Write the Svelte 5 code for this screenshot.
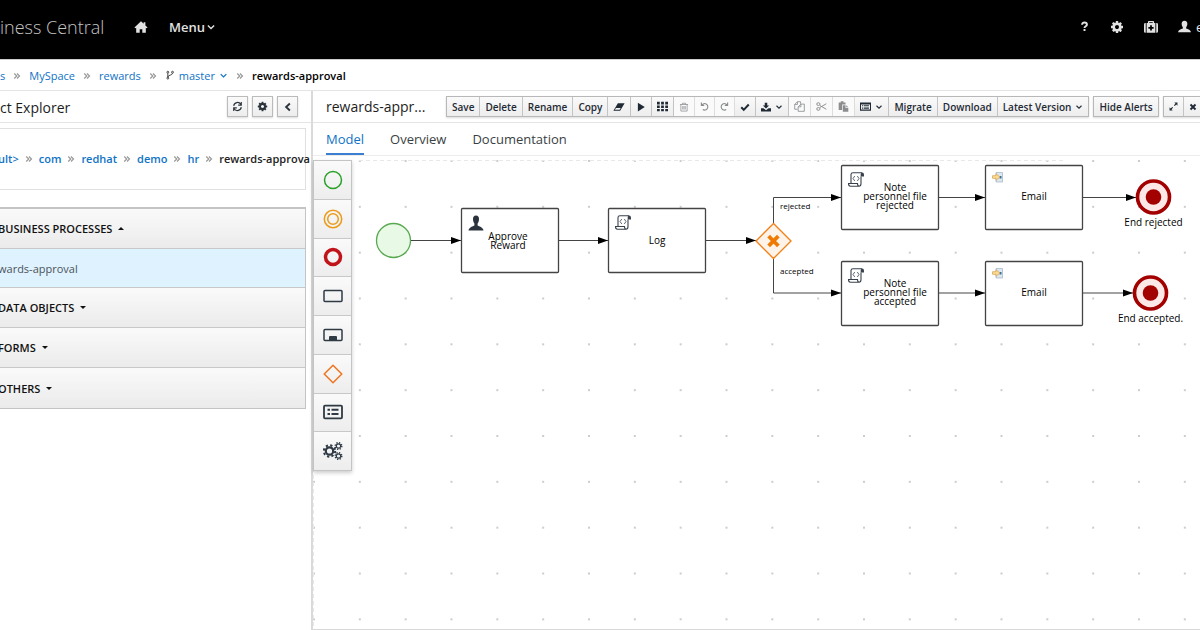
<script lang="ts">
	type Icon = { d: string; line?: number; box?: number };
	type Tool = { label?: string; icon?: string; title?: string; caret?: boolean; disabled?: boolean; size?: number };

	const icons: Record<string, Icon> = {
		home: { d: 'M8 1.500 0.500 8.500 1.500 9.500 2.500 8.800V14.500H6.500V10.500H9.500V14.500H13.500V8.800L14.500 9.500 15.500 8.500 13 6.200V2.500H11V4.300Z' },
		down: { d: 'M3 5.500 8 10.500 13 5.500', line: 2.2 },
		left: { d: 'M11 2.500 5 8 11 13.500', line: 3 },
		double: { d: 'M2.500 3 7.500 8 2.500 13M8 3 13 8 8 13', line: 2.4 },
		branch: { d: 'M4.500 5V11.500M12 5C12 9 4.500 7.500 4.500 11.500M3 3.500a1.500 1.500 0 1 0 3 0a1.500 1.500 0 1 0-3 0M3 13a1.500 1.500 0 1 0 3 0a1.500 1.500 0 1 0-3 0M10.500 3.500a1.500 1.500 0 1 0 3 0a1.500 1.500 0 1 0-3 0', line: 1.4 },
		question: { d: 'M4.500 5.500C4.500 2.800 6 2.300 8 2.300S11.500 3.300 11.500 5.300C11.500 7.600 8 7.500 8 10M8 11.800V14.500', line: 2.8 },
		cog: {
			box: 1792,
			d: 'M1152 896q0-106-75-181t-181-75-181 75-75 181 75 181 181 75 181-75 75-181zm512-109v222q0 12-8 23t-20 13l-185 28q-19 54-39 91 35 50 107 138 10 12 10 25t-9 23q-27 37-99 108t-94 71q-12 0-26-9l-138-108q-44 23-91 38-16 136-29 186-7 28-36 28h-222q-14 0-24.500-8.500t-11.500-21.500l-28-184q-49-16-90-37l-141 107q-10 9-25 9-14 0-25-11-126-114-165-168-7-10-7-23 0-12 8-23 15-21 51-66.500t54-70.500q-27-50-41-99l-183-27q-13-2-21-12.500t-8-23.500v-222q0-12 8-23t19-13l186-28q14-46 39-92-40-57-107-138-10-12-10-24 0-10 9-23 26-36 98.500-107.500t94.500-71.500q13 0 26 10l138 107q44-23 91-38 16-136 29-186 7-28 36-28h222q14 0 24.500 8.500t11.500 21.500l28 184q49 16 90 37l142-107q9-9 24-9 13 0 25 10 129 119 165 170 7 8 7 22 0 12-8 23-15 21-51 66.500t-54 70.500q26 50 41 98l183 28q13 2 21 12.500t8 23.500z'
		},
		medkit: { d: 'M0 5Q0 3.500 1.500 3.500H2V14.500H1.500Q0 14.500 0 13ZM14 3.500H14.500Q16 3.500 16 5V13Q16 14.500 14.500 14.500H14ZM3 3.500H4.500V2Q4.500 1 5.500 1H10.500Q11.500 1 11.500 2V3.500H13V14.500H3ZM6 3.500H10V2.500H6ZM7 6V8H5V10H7V12H9V10H11V8H9V6Z' },
		user: { d: 'M8 1C10.500 1 11.700 2.700 11.500 5 11.400 7 10.500 8.500 10 9.200V10.500C12.500 11.500 15.500 12 16 15H0C0.500 12 3.500 11.500 6 10.500V9.200C5.500 8.500 4.600 7 4.500 5 4.300 2.700 5.500 1 8 1Z' },
		refresh: { d: 'M2.500 7A5.600 5.600 0 0 1 12.800 4.800M13.500 1.500V6H9M13.500 9A5.600 5.600 0 0 1 3.200 11.200M2.500 14.500V10H7', line: 1.7 },
		eraser: { d: 'M6.500 3H15.500L9.500 13H0.500ZM3.900 9.300 2.500 11.800H8.800L10.300 9.300Z' },
		play: { d: 'M3 1 14 8 3 15Z' },
		grid: { d: 'M0 1H4V5H0ZM6 1H10V5H6ZM12 1H16V5H12ZM0 6.500H4V10H0ZM6 6.500H10V10H6ZM12 6.500H16V10H12ZM0 11.500H4V15H0ZM6 11.500H10V15H6ZM12 11.500H16V15H12Z' },
		trash: { d: 'M1.500 4H14.500M5.500 4V2H10.500V4M3 4V14.500H13V4M6 6.500V12M8 6.500V12M10 6.500V12', line: 1.2 },
		undo: { d: 'M2.500 1V6H7.500M3 5.800A5.800 5.800 0 1 1 5 13.500', line: 2 },
		redo: { d: 'M13.500 1V6H8.500M13 5.800A5.800 5.800 0 1 0 11 13.500', line: 2 },
		check: { d: 'M2 8.500 6 12.500 14 4', line: 3.2 },
		download: { d: 'M6 1H10V5.500H13L8 10.500 3 5.500H6ZM0 10H4L8 13 12 10H16V15H0Z' },
		copy: { d: 'M5 12H1V5L5 1H9.500V4M5 1V5H1M10 4.500H15V15H6V8.500L10 4.500V8.500H6', line: 1.2 },
		cut: { d: 'M5.500 6.500 15 12M5.500 9.500 15 4M1 4.500a2.400 2 0 1 0 4.800 0a2.400 2 0 1 0-4.800 0M1 11.500a2.400 2 0 1 0 4.800 0a2.400 2 0 1 0-4.800 0', line: 1.4 },
		paste: { d: 'M1 2H4V0.500H8V2H11V5H6V13H1ZM7 6H11V10H15V15.500H7ZM12 6 15 9H12Z' },
		list: { d: 'M0 2H16V14H0ZM1.500 5V12.500H14.500V5ZM3 6H4.500V7.200H3ZM5.500 6H13V7.200H5.500ZM3 8.200H4.500V9.400H3ZM5.500 8.200H13V9.400H5.500ZM3 10.400H4.500V11.600H3ZM5.500 10.400H13V11.600H5.500Z' },
		expand: { d: 'M9.500 1H15V6.500L13 4.500 10.200 7.300 8.700 5.800 11.500 3ZM6.500 15H1V9.500L3 11.500 5.800 8.700 7.300 10.200 4.500 13Z' },
		close: { d: 'M3 3 13 13M13 3 3 13', line: 3.8 }
	};

	const crumbs = ['s', 'MySpace', 'rewards'];
	const packages = ['ult>', 'com', 'redhat', 'demo', 'hr'];

	const sections = [
		{ title: 'BUSINESS PROCESSES', open: true, items: ['wards-approval'] },
		{ title: 'DATA OBJECTS', open: false, items: [] },
		{ title: 'FORMS', open: false, items: [] },
		{ title: 'OTHERS', open: false, items: [] }
	];

	const toolGroups: Tool[][] = [
		[
			{ label: 'Save' },
			{ label: 'Delete' },
			{ label: 'Rename' },
			{ label: 'Copy' },
			{ icon: 'eraser', title: 'Clear', size: 12 },
			{ icon: 'play', title: 'Run', size: 10 },
			{ icon: 'grid', title: 'Grid', size: 11 },
			{ icon: 'trash', title: 'Remove', disabled: true, size: 10 },
			{ icon: 'undo', title: 'Undo', disabled: true, size: 9 },
			{ icon: 'redo', title: 'Redo', disabled: true, size: 9 },
			{ icon: 'check', title: 'Validate', size: 10 },
			{ icon: 'download', title: 'Export', caret: true, size: 10 },
			{ icon: 'copy', title: 'Copy shape', disabled: true, size: 11 },
			{ icon: 'cut', title: 'Cut shape', disabled: true, size: 11 },
			{ icon: 'paste', title: 'Paste shape', disabled: true, size: 11 },
			{ icon: 'list', title: 'Form', caret: true, size: 11 },
			{ label: 'Migrate' },
			{ label: 'Download' },
			{ label: 'Latest Version', caret: true }
		],
		[{ label: 'Hide Alerts' }],
		[
			{ icon: 'expand', title: 'Expand', size: 9 },
			{ icon: 'close', title: 'Close', size: 8 }
		]
	];

	const tabs = ['Model', 'Overview', 'Documentation'];
	let activeTab = $state('Model');

	const palette = ['start', 'intermediate', 'end', 'task', 'subprocess', 'gateway', 'data', 'service'];

	// Canvas grid: twelve steps span 550px
	const gridStep = 550 / 12;

	const tasks = [
		{ x: 148, y: 52, kind: 'user', lines: ['Approve', 'Reward'], tx: 195, ty: 84 },
		{ x: 295, y: 52, kind: 'script', lines: ['Log'], tx: 344, ty: 88 },
		{ x: 528, y: 9, kind: 'script', lines: ['Note', 'personnel file', 'rejected'], tx: 582, ty: 35 },
		{ x: 528, y: 105, kind: 'script', lines: ['Note', 'personnel file', 'accepted'], tx: 582, ty: 131 },
		{ x: 672, y: 9, kind: 'email', lines: ['Email'], tx: 721, ty: 44 },
		{ x: 672, y: 105, kind: 'email', lines: ['Email'], tx: 721, ty: 140 }
	];

	const flows = [
		'M98 84.500H148',
		'M246 84.500H295',
		'M393 84.500H443',
		'M460.500 67V41.500H528',
		'M460.500 103V137H528',
		'M626 41.500H672',
		'M626 137H672',
		'M770 41.500H823',
		'M770 137H820'
	];

	const ends = [
		{ x: 840.5, y: 41, label: 'End rejected' },
		{ x: 837.5, y: 137, label: 'End accepted.' }
	];
</script>

{#snippet icon(name: string, size: number)}
	{@const i = icons[name]}
	<svg class="icon" width={size} height={size} viewBox="0 0 {i.box ?? 16} {i.box ?? 16}" aria-hidden="true">
		{#if i.line}
			<path d={i.d} fill="none" stroke="currentColor" stroke-width={i.line} />
		{:else}
			<path d={i.d} fill="currentColor" fill-rule="evenodd" />
		{/if}
	</svg>
{/snippet}

<div class="app">
	<header class="masthead">
		<span class="brand">iness Central</span>
		<a class="home" href="#home" aria-label="Home">{@render icon('home', 14)}</a>
		<button class="menu">Menu {@render icon('down', 10)}</button>
		<div class="utilities">
			<button aria-label="Help">{@render icon('question', 11)}</button>
			<button aria-label="Settings">{@render icon('cog', 14)}</button>
			<button aria-label="Support">{@render icon('medkit', 14)}</button>
			<button class="account" aria-label="Account">{@render icon('user', 13)} e</button>
		</div>
	</header>

	<nav class="breadcrumb" aria-label="Location">
		{#each crumbs as crumb}
			<a href="#{crumb}">{crumb}</a>
			<span class="sep">{@render icon('double', 8)}</span>
		{/each}
		<button class="branch">
			<span class="fork">{@render icon('branch', 10)}</span>
			master
			{@render icon('down', 9)}
		</button>
		<span class="sep">{@render icon('double', 8)}</span>
		<strong>rewards-approval</strong>
	</nav>

	<div class="workspace">
		<aside class="explorer">
			<div class="explorer-head">
				<h2>ct Explorer</h2>
				<button aria-label="Refresh">{@render icon('refresh', 11)}</button>
				<button aria-label="Customize">{@render icon('cog', 11)}</button>
				<button aria-label="Collapse">{@render icon('left', 10)}</button>
			</div>

			<nav class="packages" aria-label="Package">
				{#each packages as pkg}
					<a href="#{pkg}">{pkg}</a>
					<span class="sep">{@render icon('double', 8)}</span>
				{/each}
				<strong>rewards-approva</strong>
			</nav>

			<div class="accordion">
				{#each sections as section}
					<button class="section" aria-expanded={section.open}>
						{section.title}
						<span class="caret" class:up={section.open}></span>
					</button>
					{#each section.items as item}
						<a class="asset" href="#{item}">{item}</a>
					{/each}
				{/each}
			</div>
		</aside>

		<main class="editor">
			<div class="editor-head">
				<h1>rewards-appr...</h1>
				<div class="toolbar">
					{#each toolGroups as group}
						<div class="group">
							{#each group as tool}
								<button disabled={tool.disabled} aria-label={tool.title}>
									{#if tool.icon}{@render icon(tool.icon, tool.size ?? 10)}{/if}
									{tool.label ?? ''}
									{#if tool.caret}{@render icon('down', 8)}{/if}
								</button>
							{/each}
						</div>
					{/each}
				</div>
			</div>

			<div class="tabs" role="tablist">
				{#each tabs as tab}
					<button role="tab" class:active={tab === activeTab} aria-selected={tab === activeTab} onclick={() => (activeTab = tab)}>
						{tab}
					</button>
				{/each}
			</div>

			<div class="canvas">
				<svg class="diagram" role="img" aria-label="Process diagram">
					<defs>
						<pattern id="dots" width={gridStep} height={gridStep} patternUnits="userSpaceOnUse" y="4">
							<circle cx="1" cy="1" r="0.900" fill="#b5b5b5" />
						</pattern>
						<marker id="arrow" viewBox="0 0 10 8" refX="10" refY="4" markerWidth="10" markerHeight="8" orient="auto" markerUnits="userSpaceOnUse">
							<path d="M0 0.500 10 4 0 7.500Z" />
						</marker>
					</defs>

					<rect width="100%" height="100%" fill="url(#dots)" />
					<path d="M46 4.500H752" stroke="#e8e8e8" stroke-dasharray="4 3" />
					<path d="M0.500 4V474" stroke="#e8e8e8" stroke-dasharray="4 3" />

					<circle cx="80.500" cy="84.500" r="17" fill="#e8fae6" stroke="#5aa852" stroke-width="1.300" />

					{#each flows as flow}
						<path d={flow} class="flow" marker-end="url(#arrow)" />
					{/each}

					{#each tasks as task}
						<g transform="translate({task.x} {task.y})">
							<rect class="task" x="0.500" y="0.500" width="97" height="64" rx="1" />
							{#if task.kind === 'user'}
								<path
									transform="translate(7 7)"
									d="M8 0.500C10 0.500 11 2 11 4 11 6 10.300 7.500 9.600 8.500V10.500C11 11.500 15 12 15.500 15.500H0.500C1 12 5 11.500 6.400 10.500V8.500C5.700 7.500 5 6 5 4 5 2 6 0.500 8 0.500Z"
									fill="#2b343d"
								/>
							{:else if task.kind === 'script'}
								<g transform="translate(7 7)" fill="none" stroke="#39424c">
									<path d="M3 11V2.500Q3 0.800 5 0.800H14M13 4.500V11.500Q13 14.200 11 14.200H2.500Q0.500 14.200 0.500 11.500H9.500Q9.500 14 11 14" stroke-width="1.100" />
									<path d="M12.700 4.500V2Q12.700 0.500 14.300 0.500T16 2.500V4.500Z" fill="#39424c" stroke="none" />
									<path d="M6.800 4 5 6.500 6.800 9M9.300 4 11 6.500 9.300 9" stroke-width="0.800" />
								</g>
							{:else}
								<g transform="translate(7 7)">
									<path d="M4 0.500H10.500V10H4Z" fill="#dce7f1" stroke="#9db2c6" stroke-width="0.700" />
									<path d="M7.500 4H9.500V6.500H7.500Z" fill="#3f6d9c" />
									<path d="M0.500 3.700H4V1.700L8 5 4 8.300V6.300H0.500Z" fill="#fbdc94" stroke="#d2a14a" stroke-width="0.700" />
								</g>
							{/if}
						</g>
						<text class="label">
							{#each task.lines as line, n}
								<tspan x={task.tx} y={task.ty + n * 9}>{line}</tspan>
							{/each}
						</text>
					{/each}

					<path d="M460.500 67.500 478 85 460.500 102.500 443 85Z" fill="#fef3e8" stroke="#f0821a" stroke-width="1.400" stroke-linejoin="round" />
					<path d="M457 81.500 464 88.500M464 81.500 457 88.500" stroke="#ee7a00" stroke-width="3.800" stroke-linecap="square" />
					<text class="flow-label" x="467" y="53">rejected</text>
					<text class="flow-label" x="467" y="118">accepted</text>

					{#each ends as end}
						<circle cx={end.x} cy={end.y} r="16" fill="#fde8e8" stroke="#a30000" stroke-width="3.600" />
						<circle cx={end.x} cy={end.y} r="7.800" fill="#a30000" />
						<text class="label" x={end.x} y={end.y + 29}>{end.label}</text>
					{/each}
				</svg>

				<div class="palette">
					{#each palette as kind}
						<button aria-label={kind}>
							<svg width="20" height="20" viewBox="0 0 20 20" fill="none" stroke="#2f3a45" stroke-width="1.500">
								{#if kind === 'start'}
									<circle cx="10" cy="10" r="8.500" stroke="#2aa127" />
								{:else if kind === 'intermediate'}
									<circle cx="10" cy="10" r="8.700" stroke="#eb9b1c" />
									<circle cx="10" cy="10" r="5.300" stroke="#eb9b1c" />
								{:else if kind === 'end'}
									<circle cx="10" cy="10" r="7.500" stroke="#c1141a" stroke-width="3.500" />
								{:else if kind === 'task'}
									<rect x="1" y="4.500" width="18" height="11" rx="1" />
								{:else if kind === 'subprocess'}
									<rect x="1" y="4.500" width="18" height="11" rx="1" />
									<path d="M6 15V12Q6 11 7 11H13Q14 11 14 12V15Z" fill="#2f3a45" stroke="none" />
								{:else if kind === 'gateway'}
									<path d="M10 1.200 18.800 10 10 18.800 1.200 10Z" stroke="#ee7420" stroke-linejoin="round" />
								{:else if kind === 'data'}
									<rect x="1" y="3.700" width="18" height="12.600" rx="1" stroke-width="1.800" />
									<path d="M4.500 7.800H7M8.500 7.800H15.500M4.500 12H7M8.500 12H15.500" stroke-width="2" />
								{:else}
									<g stroke-linecap="butt">
										<circle cx="6.500" cy="10" r="3.700" stroke-width="2.200" />
										<circle cx="6.500" cy="10" r="5.700" stroke-width="2" stroke-dasharray="2.240 2.240" />
										<circle cx="15.500" cy="5" r="2.200" stroke-width="1.200" />
										<circle cx="15.500" cy="5" r="3.300" stroke-width="1.400" stroke-dasharray="1.300 1.300" />
										<circle cx="15.500" cy="15" r="2.200" stroke-width="1.200" />
										<circle cx="15.500" cy="15" r="3.300" stroke-width="1.400" stroke-dasharray="1.300 1.300" />
									</g>
								{/if}
							</svg>
						</button>
					{/each}
				</div>
			</div>
		</main>
	</div>
</div>

<style>
	:global(body) {
		margin: 0;
		background: #fff;
	}

	.app {
		display: flex;
		flex-direction: column;
		min-height: 100vh;
		overflow: hidden;
		font-family: 'Open Sans', 'Noto Sans', sans-serif;
		font-size: 11px;
		color: #1d1d1d;
	}

	button {
		font: inherit;
		color: inherit;
		margin: 0;
		padding: 0;
		border: 0;
		background: none;
		cursor: pointer;
	}

	a {
		color: #0f73c6;
		text-decoration: none;
	}

	h1,
	h2 {
		margin: 0;
		font-weight: 400;
	}

	.icon {
		flex: none;
		display: block;
	}

	.masthead {
		display: flex;
		align-items: center;
		height: 53px;
		padding-bottom: 6px;
		background: #000;
		color: #e2e2e2;
	}

	.brand {
		width: 134px;
		font-size: 18px;
		font-weight: 300;
		color: #c4c4c4;
	}

	.home {
		color: #e2e2e2;
	}

	.menu {
		display: flex;
		align-items: center;
		gap: 1px;
		margin-left: 21px;
		font-size: 13px;
		font-weight: 600;
	}

	.utilities {
		display: flex;
		align-items: center;
		gap: 20px;
		margin-left: auto;
	}

	.account {
		display: flex;
		align-items: center;
		gap: 5px;
		width: 22px;
		white-space: nowrap;
		font-size: 13px;
	}

	.breadcrumb {
		display: flex;
		align-items: center;
		height: 30px;
		border-top: 1px solid #ccc;
		border-bottom: 1px solid #e4e4e4;
	}

	.breadcrumb strong {
		color: #000;
		font-weight: 600;
	}

	.sep {
		padding: 1px 8px 0;
		color: #999;
	}

	.branch {
		display: flex;
		align-items: center;
		gap: 4px;
		color: #0f73c6;
	}

	.fork {
		color: #333;
	}

	.workspace {
		display: flex;
		flex: 1;
	}

	.explorer {
		flex: none;
		width: 311px;
		overflow: hidden;
		border-right: 2px solid #dadada;
	}

	.explorer-head {
		display: flex;
		align-items: center;
		gap: 4px;
		height: 31px;
		padding-right: 13px;
		border-bottom: 1px solid #e4e4e4;
	}

	.explorer-head h2 {
		flex: 1;
		padding-top: 1px;
		font-size: 14px;
	}

	.explorer-head button {
		display: flex;
		align-items: center;
		justify-content: center;
		width: 21px;
		height: 21px;
		border: 1px solid #bbb;
		background: linear-gradient(#fafafa, #ededed);
		color: #2b343d;
		box-shadow: 0 1px 2px rgba(0, 0, 0, 0.15);
	}

	.packages {
		display: flex;
		align-items: center;
		height: 58px;
		margin: 5px 5px 0 -3px;
		padding-bottom: 2px;
		border: 1px solid #e0e0e0;
		font-weight: 600;
		white-space: nowrap;
	}

	.packages .sep {
		padding: 1px 6px 0;
	}

	.packages strong {
		font-weight: 600;
		color: #222;
	}

	.accordion {
		margin: 17px 5px 0 -3px;
		border: 1px solid #c4c4c4;
		border-top-width: 2px;
	}

	.section {
		display: flex;
		align-items: center;
		gap: 6px;
		width: 100%;
		height: 40px;
		border-bottom: 1px solid #c8c8c8;
		background: linear-gradient(#fafafa, #ebebeb);
		color: #111;
		font-weight: 600;
	}

	.section:last-child {
		border-bottom: 0;
	}

	.caret {
		border: 3px solid transparent;
		border-top-color: #111;
		border-bottom: 0;
	}

	.caret.up {
		border-top: 0;
		border-bottom: 3px solid #111;
	}

	.asset {
		display: flex;
		align-items: center;
		height: 38px;
		border-bottom: 1px solid #c8c8c8;
		background: #def3ff;
		color: #4d5258;
	}

	.editor {
		display: flex;
		flex: 1;
		flex-direction: column;
		min-width: 0;
	}

	.editor-head {
		display: flex;
		align-items: center;
		height: 31px;
		padding-left: 13px;
		border-bottom: 1px solid #e4e4e4;
		overflow: hidden;
	}

	.editor-head h1 {
		flex: none;
		width: 120px;
		font-size: 14px;
	}

	.toolbar {
		display: flex;
		gap: 4px;
	}

	.group {
		display: flex;
		border: 1px solid #b8b8b8;
		box-shadow: 0 1px 2px rgba(0, 0, 0, 0.15);
	}

	.group button {
		display: flex;
		align-items: center;
		gap: 4px;
		height: 19px;
		padding: 0 5px;
		border-right: 1px solid #c4c4c4;
		background: linear-gradient(#fafafa, #ededed);
		color: #1f2a35;
		font-size: 10px;
		font-weight: 600;
		white-space: nowrap;
	}

	.group button:last-child {
		border-right: 0;
	}

	.group button:disabled {
		background: #fafafa;
		color: #8b8d8f;
		border-right-color: #ddd;
	}

	.tabs {
		display: flex;
		gap: 26px;
		padding-left: 13px;
		border-bottom: 1px solid #ececec;
	}

	.tabs button {
		height: 32px;
		padding-top: 2px;
		border-bottom: 2px solid transparent;
		font-size: 13px;
		color: #3a3f44;
	}

	.tabs button.active {
		border-bottom-color: #3c7fd0;
		color: #0f73c6;
	}

	.canvas {
		position: relative;
		display: flex;
		flex: 1;
		min-height: 340px;
		border-bottom: 1px solid #d8d8d8;
	}

	.diagram {
		flex: 1;
		min-width: 0;
		align-self: stretch;
	}

	.task {
		fill: #fff;
		stroke: #444;
		stroke-width: 1.3px;
	}

	.flow {
		fill: none;
		stroke: #444;
		stroke-width: 1px;
	}

	.label {
		font-size: 10px;
		text-anchor: middle;
		fill: #000;
	}

	.flow-label {
		font-size: 8px;
		fill: #000;
	}

	.palette {
		position: absolute;
		top: 4px;
		left: 0;
		display: flex;
		flex-direction: column;
		height: 309px;
		border: 1px solid #c4c4c4;
		box-shadow: 0 2px 4px rgba(0, 0, 0, 0.2);
	}

	.palette button {
		display: flex;
		flex: 1;
		align-items: center;
		justify-content: center;
		width: 37px;
		border-bottom: 1px solid #c8c8c8;
		background: linear-gradient(#fafafa, #ededed);
	}

	.palette button:last-child {
		border-bottom: 0;
	}
</style>
